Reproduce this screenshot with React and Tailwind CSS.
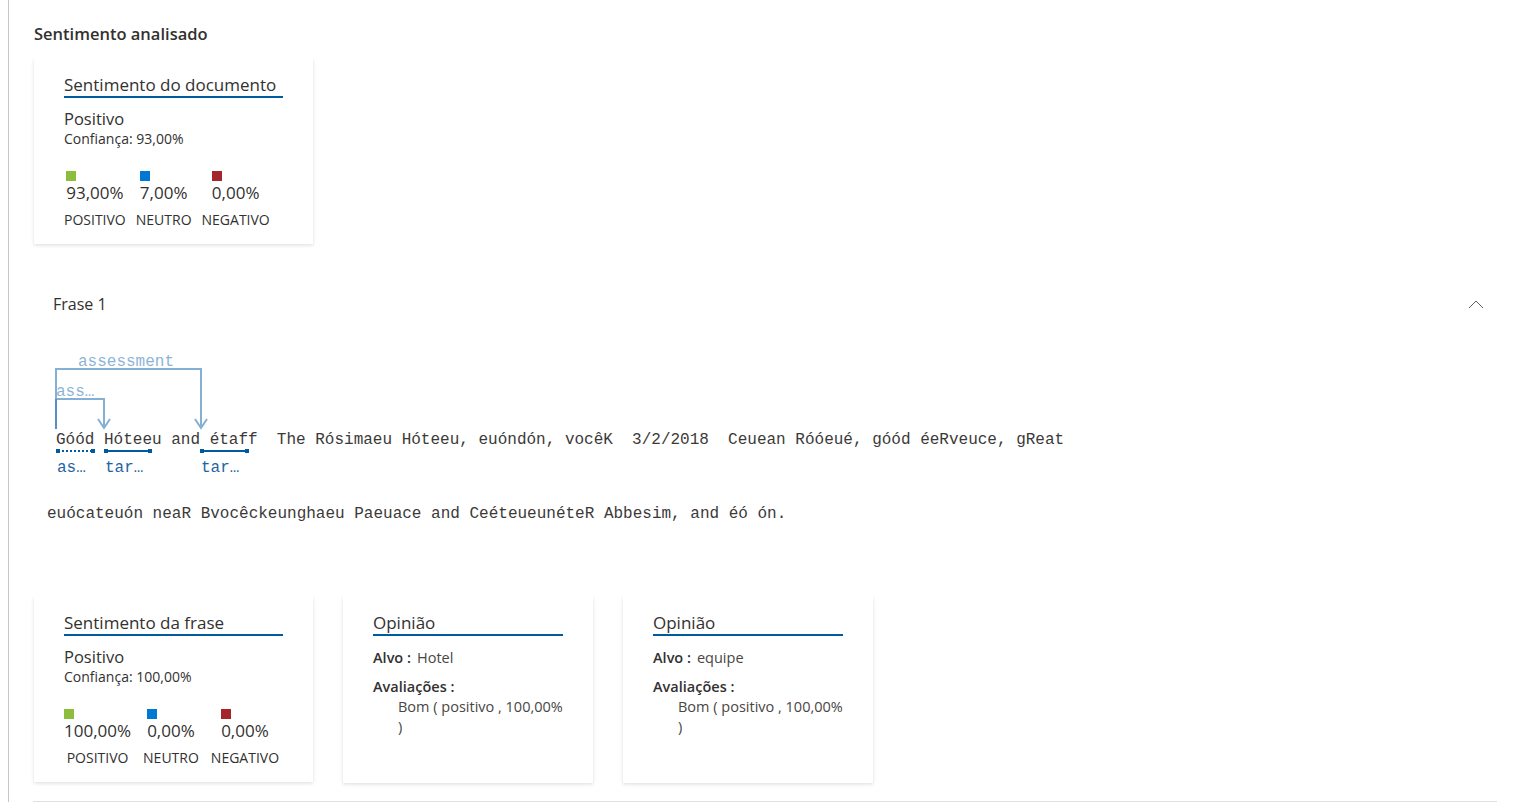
import React from "react";

const mono = "font-['Liberation_Mono','DejaVu_Sans_Mono',monospace]";

const Swatch = ({ color, value, label }) => (
    <div className="flex flex-col items-center">
        <div className="flex flex-col items-start">
            <span className={`w-[10px] h-[10px] ${color}`}></span>
            <span className="mt-px text-[17px] leading-[22px] text-[#323130]">{value}</span>
        </div>
        <span className="mt-[7px] text-[14px] leading-[18px] text-[#323130]">{label}</span>
    </div>
);

const SentimentCard = ({ title, confidence, pos, neu, neg, gap }) => (
    <div className="w-[279px] h-[186px] shrink-0 bg-white px-[30px] pt-[15px] shadow-[0_1.6px_3.6px_rgba(0,0,0,0.13),0_0.3px_0.9px_rgba(0,0,0,0.11)]">
        <div className="text-[17px] leading-[23px] text-[#323130] border-b-2 border-[#005a9e]">{title}</div>
        <div className="mt-[11px] text-[16.5px] leading-5 text-[#323130]">Positivo</div>
        <div className="mt-[1px] text-[14px] leading-[18px] text-[#323130]">Confiança: {confidence}</div>
        <div className={`mt-[23px] flex ${gap}`}>
            <Swatch color="bg-[#8cbd3c]" value={pos} label="POSITIVO" />
            <Swatch color="bg-[#0078d4]" value={neu} label="NEUTRO" />
            <Swatch color="bg-[#a4262c]" value={neg} label="NEGATIVO" />
        </div>
    </div>
);

const OpinionCard = ({ target }) => (
    <div className="w-[250px] h-[187px] shrink-0 bg-white px-[30px] pt-[15px] shadow-[0_1.6px_3.6px_rgba(0,0,0,0.13),0_0.3px_0.9px_rgba(0,0,0,0.11)]">
        <div className="text-[17px] leading-[23px] text-[#323130] border-b-2 border-[#005a9e]">Opinião</div>
        <div className="mt-[12px] text-[14.5px] leading-5 text-[#323130]">
            <span className="font-semibold">Alvo :</span>
            <span className="ml-[6px] text-[#484644]">{target}</span>
        </div>
        <div className="mt-[9px] text-[14.5px] leading-5 text-[#323130]">
            <div className="font-semibold">Avaliações :</div>
            <div className="pl-[25px] text-[#484644]">
                <div className="whitespace-nowrap">Bom ( positivo , 100,00%</div>
                <div>)</div>
            </div>
        </div>
    </div>
);

const Annotated = () => (
    <div className={`relative ${mono} text-[16px] leading-5 text-[#3b3a39]`}>
        <svg className="absolute left-0 top-0 pointer-events-none" width="320" height="140" viewBox="0 0 320 140" fill="none">
            <path d="M9 88 V28 H154 V87" stroke="#86afd6" strokeWidth="2" />
            <path d="M148 78 L154 87 L160 78" stroke="#86afd6" strokeWidth="2" />
            <path d="M9 58 H57 V87" stroke="#86afd6" strokeWidth="2" />
            <path d="M51 78 L57 87 L63 78" stroke="#86afd6" strokeWidth="2" />
            <path d="M9 58 V88" stroke="#5b8dc2" strokeWidth="2" />
            <path d="M11 110 H46" stroke="#005a9e" strokeWidth="2" strokeDasharray="2 2" />
            <rect x="9" y="108" width="4" height="4" fill="#005a9e" />
            <rect x="44" y="108" width="4" height="4" fill="#005a9e" />
            <path d="M59 110 H103" stroke="#005a9e" strokeWidth="2" />
            <rect x="57" y="108" width="4" height="4" fill="#005a9e" />
            <rect x="101" y="108" width="4" height="4" fill="#005a9e" />
            <path d="M155 110 H200" stroke="#005a9e" strokeWidth="2" />
            <rect x="153" y="108" width="4" height="4" fill="#005a9e" />
            <rect x="198" y="108" width="4" height="4" fill="#005a9e" />
        </svg>
        <span className="absolute left-[31px] top-[11px] text-[#8db4d8]">assessment</span>
        <span className="absolute left-[9px] top-[41px] text-[#8db4d8]">ass…</span>
        <span className="absolute left-[10px] top-[117px] text-[#1e63a6]">as…</span>
        <span className="absolute left-[58px] top-[117px] text-[#1e63a6]">tar…</span>
        <span className="absolute left-[154px] top-[117px] text-[#1e63a6]">tar…</span>
        <div className="pt-[89px] pl-[9px] whitespace-pre">Góód Hóteeu and étaff  The Rósimaeu Hóteeu, euóndón, vocêK  3/2/2018  Ceuean Róóeué, góód éeRveuce, gReat</div>
        <div className="mt-[54px] whitespace-pre">euócateuón neaR Bvocêckeunghaeu Paeuace and CeéteueunéteR Abbesim, and éó ón.</div>
    </div>
);

export default function App() {
    return (
        <div className="min-h-screen bg-white pl-2 font-['Open_Sans',sans-serif]">
            <div className="min-h-[802px] border-l border-[#c8c6c4] pl-[25px] pr-[24px] pt-[22px]">
                <h2 className="text-[16.5px] leading-6 font-semibold text-[#323130]">Sentimento analisado</h2>
                <div className="mt-3">
                    <SentimentCard title="Sentimento do documento" confidence="93,00%" pos="93,00%" neu="7,00%" neg="0,00%" gap="gap-[10px]" />
                </div>

                <div className="mt-[38px] h-[44px] flex items-center justify-between pl-[19px] pr-[13px]">
                    <span className="text-[16px] text-[#323130]">Frase 1</span>
                    <svg width="16" height="9" viewBox="0 0 16 9" fill="none">
                        <path d="M1 8 L8 1 L15 8" stroke="#605e5c" strokeWidth="1" />
                    </svg>
                </div>

                <div className="mt-[15px] ml-[13px]">
                    <Annotated />
                </div>

                <div className="mt-[72px] flex gap-[30px]">
                    <SentimentCard title="Sentimento da frase" confidence="100,00%" pos="100,00%" neu="0,00%" neg="0,00%" gap="gap-[12px]" />
                    <OpinionCard target="Hotel" />
                    <OpinionCard target="equipe" />
                </div>
                <div className="mt-[18px] -ml-px border-b border-[#e1dfdd]"></div>
            </div>
        </div>
    );
}
